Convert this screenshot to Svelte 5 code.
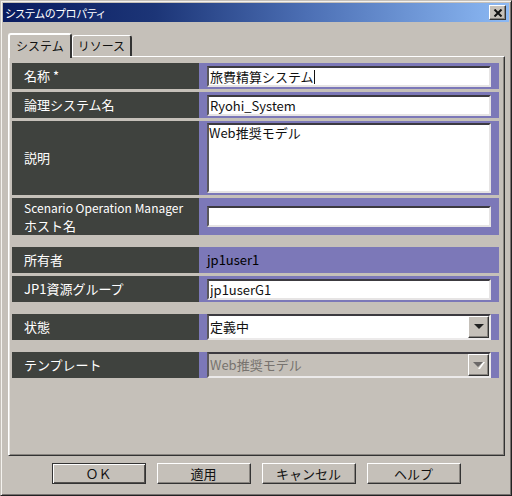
<script>
  let name = $state("旅費精算システム");
  let logicalName = $state("Ryohi_System");
  let description = $state("Web推奨モデル");
  let host = $state("");
  let group = $state("jp1userG1");
  let status = $state("定義中");
  let template = $state("Web推奨モデル");
  let tab = $state("システム");
  const tabs = ["システム", "リソース"];
  const owner = "jp1user1";
  const buttons = ["ＯＫ", "適用", "キャンセル", "ヘルプ"];
</script>

<div class="window">
  <header class="titlebar">
    <h1>システムのプロパティ</h1>
    <button class="close" aria-label="閉じる">
      <svg width="10" height="8" viewBox="0 0 10 8">
        <path d="M1.5 0.5l7 7M8.5 0.5l-7 7" stroke="#111" stroke-width="2" />
      </svg>
    </button>
  </header>

  <div class="tabs" role="tablist">
    {#each tabs as item}
      <button
        class="tab"
        class:active={tab === item}
        role="tab"
        aria-selected={tab === item}
        onclick={() => (tab = item)}>{item}</button>
    {/each}
  </div>

  <main class="panel">
    <div class="row">
      <label for="name">名称 *</label>
      <div class="field">
        <div class="editing">
          <input id="name" type="text" bind:value={name} />
          <span class="caret"></span>
        </div>
      </div>
    </div>
    <div class="row">
      <label for="logical">論理システム名</label>
      <div class="field">
        <input id="logical" type="text" bind:value={logicalName} />
      </div>
    </div>
    <div class="row tall">
      <label for="description">説明</label>
      <div class="field">
        <textarea id="description" bind:value={description}></textarea>
      </div>
    </div>
    <div class="row double">
      <label for="host"><span class="latin">Scenario Operation Manager</span>ホスト名</label>
      <div class="field">
        <input id="host" type="text" bind:value={host} />
      </div>
    </div>
    <div class="row spaced">
      <label for="owner">所有者</label>
      <div class="field">
        <output id="owner">{owner}</output>
      </div>
    </div>
    <div class="row">
      <label for="group">JP1資源グループ</label>
      <div class="field">
        <input id="group" type="text" bind:value={group} />
      </div>
    </div>
    <div class="row spaced">
      <label for="status">状態</label>
      <div class="field">
        <div class="combo">
          <select id="status" bind:value={status}>
            <option>定義中</option>
          </select>
          <span class="arrow">
            <svg width="10" height="6" viewBox="0 0 10 6">
              <path d="M0 0h10l-5 5z" fill="#222" />
            </svg>
          </span>
        </div>
      </div>
    </div>
    <div class="row spaced">
      <label for="template">テンプレート</label>
      <div class="field">
        <div class="combo disabled">
          <select id="template" bind:value={template} disabled>
            <option>Web推奨モデル</option>
          </select>
          <span class="arrow">
            <svg width="12" height="7" viewBox="0 0 12 7">
              <path d="M10 0h2l-5 7h-2z" fill="#fff" />
              <path d="M0 0h10l-5 5z" fill="#6b6868" />
            </svg>
          </span>
        </div>
      </div>
    </div>
  </main>

  <footer class="actions">
    {#each buttons as label, i}
      <button class="action" class:default={i === 0}>{label}</button>
    {/each}
  </footer>
</div>

<style>
  :global(body) {
    margin: 0;
    background: #c5c0b9;
  }
  .window,
  button,
  input,
  textarea,
  select {
    font-family: "Noto Sans CJK JP", sans-serif;
    font-size: 13px;
    line-height: 16px;
    color: #111;
  }
  .window {
    box-sizing: border-box;
    min-height: 100vh;
    display: flex;
    flex-direction: column;
    background: #c5c0b9;
    border: 1px solid;
    border-color: #c5c0b9 #222 #222 #c5c0b9;
    padding: 2px;
    box-shadow: inset 1px 1px #f4f2ee, inset -1px -1px #777270;
  }
  button,
  input,
  textarea,
  select {
    box-sizing: border-box;
    margin: 0;
    border-radius: 0;
    outline: none;
  }
  .titlebar {
    display: flex;
    align-items: center;
    justify-content: space-between;
    height: 19px;
    padding: 0 3px 0 2px;
    background: linear-gradient(to right, #0a1c60, #1c3577 30%, #4c6fb4 60%, #8cb9f4);
  }
  h1 {
    margin: 0;
    color: #fff;
    font-size: 11px;
    font-weight: 400;
    font-feature-settings: "palt";
  }
  button {
    background: #c5c0b9;
    border: 1px solid;
    border-color: #fff #333 #333 #fff;
    box-shadow: inset -1px -1px #88847f;
    padding: 0;
  }
  .close {
    display: flex;
    align-items: center;
    justify-content: center;
    width: 17px;
    height: 15px;
  }
  .tabs {
    display: flex;
    align-items: flex-end;
    height: 24px;
    margin: 10px 5px 0;
  }
  .tab {
    height: 21px;
    padding: 0 5px;
    font-size: 12px;
    border-width: 1px 2px 0 1px;
    border-radius: 3px 3px 0 0;
    box-shadow: none;
  }
  .tab.active {
    position: relative;
    height: 25px;
    margin-bottom: -2px;
    padding: 0 6px 2px;
    border-left-width: 2px;
    border-top-width: 2px;
  }
  .panel {
    flex: 1;
    margin: 0 4px 0 5px;
    padding: 6px 5px 6px 3px;
    border: 1px solid;
    border-color: #fff #333 #333 #fff;
    box-shadow: inset 1px 0 #e6e3de, inset -1px -1px #88847f;
  }
  .row {
    display: flex;
    height: 26px;
    margin-bottom: 3px;
  }
  .row.tall {
    height: 74px;
  }
  .row.double {
    height: 37px;
  }
  .row.spaced {
    margin-top: 12px;
  }
  label {
    box-sizing: border-box;
    flex: none;
    display: flex;
    flex-direction: column;
    justify-content: center;
    width: 187px;
    padding-left: 12px;
    background: #3f423e;
    color: #fff;
    line-height: 18px;
    white-space: nowrap;
  }
  .latin {
    font-size: 12px;
  }
  .field {
    flex: 1;
    display: flex;
    align-items: center;
    min-width: 0;
    padding: 0 8px;
    background: #7c78b8;
  }
  input,
  textarea {
    width: 100%;
    height: 21px;
    padding: 0 1px;
    background: #fff;
    border: 2px solid;
    border-color: #3c3a40 #e6e4e4 #e6e4e4 #5a575c;
  }
  textarea {
    height: 70px;
    padding: 0;
    resize: none;
  }
  .editing {
    position: relative;
    display: flex;
    width: 100%;
  }
  .caret {
    position: absolute;
    top: 4px;
    left: 107px;
    width: 1px;
    height: 14px;
    background: #111;
  }
  output {
    color: #000;
  }
  .combo {
    position: relative;
    display: flex;
    width: 100%;
    height: 26px;
  }
  select {
    appearance: none;
    width: 100%;
    padding: 0 20px 0 1px;
    background: #fff;
    border: 2px solid;
    border-color: #3c3a40 #eceaea #eceaea #5a575c;
    opacity: 1;
  }
  .disabled select {
    background: #c5c0b9;
    color: #77736f;
  }
  .arrow {
    position: absolute;
    top: 2px;
    right: 2px;
    bottom: 2px;
    display: flex;
    align-items: center;
    justify-content: center;
    width: 19px;
    background: #c5c0b9;
    border: 1px solid;
    border-color: #fff #333 #333 #fff;
    box-shadow: inset -1px -1px #88847f;
    pointer-events: none;
  }
  .actions {
    display: flex;
    justify-content: center;
    gap: 11px;
    padding: 7px 0 9px;
  }
  .action {
    width: 94px;
    height: 21px;
  }
  .action.default {
    border-color: #333;
    box-shadow: inset 1px 1px #fff, inset -1px -1px #55524f;
  }
</style>
